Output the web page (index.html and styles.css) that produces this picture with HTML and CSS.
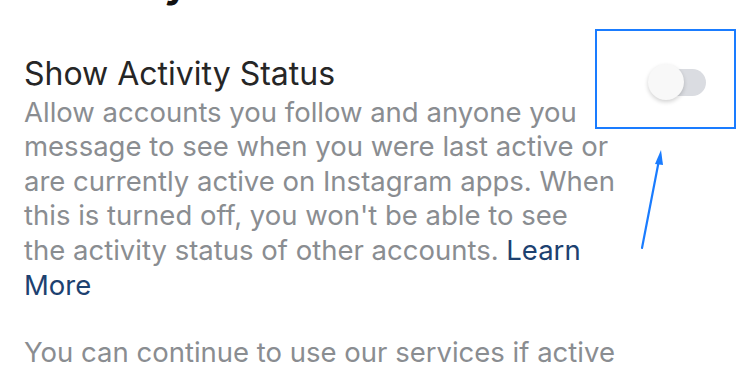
FILE: index.html
```html
<!DOCTYPE html>
<html lang="en">
<head>
  <meta charset="UTF-8" />
  <meta name="viewport" content="width=device-width, initial-scale=1.0"/>
  <title>Activity Status</title>
  <link rel="stylesheet" href="styles.css">
</head>
<body>

<div class="screen">
  <h1 class="page-title">Activity Status</h1>

  <div class="setting">
    <div class="setting-text">
      <div class="setting-name">Show Activity Status</div>
      <p class="setting-desc">Allow accounts you follow and anyone you message to see when you were last active or are currently active on Instagram apps. When this is turned off, you won't be able to see<br>the activity status of other accounts. <a href="#" class="learn">Learn More</a></p>
    </div>
    <div class="toggle">
      <span class="track"></span>
      <span class="knob"></span>
    </div>
  </div>

  <p class="setting-desc note">You can continue to use our services if active status is off.</p>

  <!-- annotation drawn over the screenshot -->
  <div class="mark-box"></div>
  <svg class="mark-arrow" width="40" height="110" viewBox="0 0 40 110">
    <line x1="12" y1="100" x2="29" y2="12" stroke="#1a7cff" stroke-width="2.2" stroke-linecap="round"/>
    <polygon points="31,2 25,16 33,17" fill="#1a7cff"/>
  </svg>
</div>

</body>
</html>
```

FILE: styles.css
```css
body {
  margin: 0;
  background: #fff;
  font-family: Inter, Roboto, "Liberation Sans", sans-serif;
  color: #262626;
}
.screen {
  position: relative;
  width: 750px;
  height: 375px;
  overflow: hidden;
  padding: 0 24px;
  box-sizing: border-box;
}
.page-title {
  margin: -38px 0 0 12px;
  font-size: 40px;
  line-height: 42px;
  font-weight: 700;
  color: #111;
  white-space: nowrap;
}
.setting {
  display: flex;
  align-items: flex-start;
  margin-top: 52.4px;
}
.setting-text {
  width: 600px;
}
.setting-name {
  font-size: 32px;
  line-height: 36px;
  color: #262626;
}
.setting-desc {
  margin: 2.3px 0 0;
  font-size: 27.5px;
  line-height: 34.6px;
  color: #8a8d91;
}
.learn {
  color: #1d4170;
  text-decoration: none;
}
.note {
  width: 600px;
  margin-top: 32.4px;
}
.toggle {
  position: relative;
  width: 58px;
  height: 38px;
  margin: 7.6px 0 0 24px;
}
.track {
  position: absolute;
  right: 0;
  top: 5px;
  width: 50px;
  height: 27px;
  border-radius: 14px;
  background: #dadce1;
}
.knob {
  position: absolute;
  left: 0;
  top: 0;
  width: 36px;
  height: 36px;
  border-radius: 50%;
  background: #f8f8f8;
  box-shadow: 0 2px 4px rgba(0,0,0,0.18);
}
.mark-box {
  position: absolute;
  left: 595px;
  top: 29px;
  width: 137px;
  height: 96px;
  border: 2px solid #1a7cff;
}
.mark-arrow {
  position: absolute;
  left: 630px;
  top: 148px;
}
```
